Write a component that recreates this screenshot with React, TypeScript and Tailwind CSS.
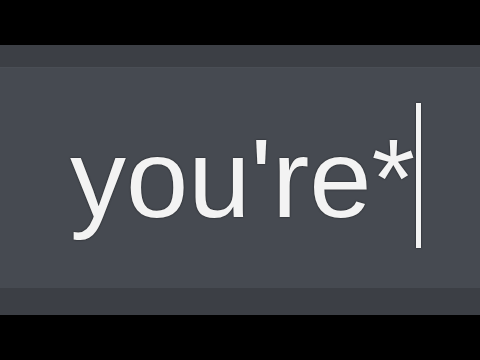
export default function App() {
  return (
    <div className="flex h-[360px] w-[480px] flex-col overflow-hidden bg-black py-[45px]">
      <div className="h-[22px] bg-[#3c3f45]" />
      <div className="h-px bg-[#4a4e55]" />
      <div className="flex flex-1 items-start bg-[#464a51] pl-[70px] pt-[35px]">
        <span
          className="mt-[20px] whitespace-pre text-[112px] leading-[112px] text-[#f3f3f3] [text-shadow:0_0_2px_rgba(0,0,0,0.7)]"
          style={{ fontFamily: '"Liberation Sans", Arial, sans-serif' }}
        >
          you're*
        </span>
        <div className="ml-[1px] h-[145px] w-[5px] bg-[#f3f3f3] shadow-[0_0_2px_rgba(0,0,0,0.7)]" />
      </div>
      <div className="h-[27px] bg-[#3c3f45]" />
    </div>
  );
}
